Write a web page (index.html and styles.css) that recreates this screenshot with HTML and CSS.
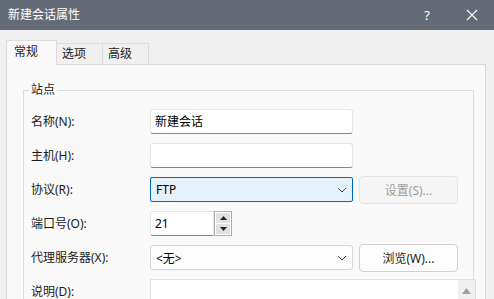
FILE: index.html
```html
<!DOCTYPE html>
<html lang="zh-cn">
<head>
    <meta charset="UTF-8">
    <title>新建会话属性</title>
    <link rel="stylesheet" href="styles.css">
</head>
<body>
<div class="dialog">
	<div class="titlebar">
		<span class="title">新建会话属性</span>
		<div class="title-btns">
			<span class="help">?</span>
			<span class="close">
				<svg width="12" height="12" viewBox="0 0 12 12"><path d="M1 1L11 11M11 1L1 11" stroke="#fff" stroke-width="1.1" fill="none"/></svg>
			</span>
		</div>
	</div>
	<div class="content">
		<div class="tabs">
			<div class="tab active">常规</div>
			<div class="tab">选项</div>
			<div class="tab">高级</div>
		</div>
		<div class="panel">
			<fieldset class="group">
				<legend>站点</legend>
				<div class="form">
					<label>名称(N):</label>
					<div class="input">新建会话</div>
					<span></span>

					<label>主机(H):</label>
					<div class="input"></div>
					<span></span>

					<label>协议(R):</label>
					<div class="select focus">
						<span>FTP</span>
						<svg width="10" height="6" viewBox="0 0 10 6"><path d="M1 1L5 5L9 1" stroke="#444" stroke-width="1" fill="none"/></svg>
					</div>
					<button class="btn" disabled>设置(S)...</button>

					<label>端口号(O):</label>
					<div class="port">
						<div class="input port-input">21</div>
						<div class="spin">
							<span class="spin-up"><svg width="7" height="4" viewBox="0 0 7 4"><path d="M0 4L3.5 0L7 4Z" fill="#222"/></svg></span>
							<span class="spin-down"><svg width="7" height="4" viewBox="0 0 7 4"><path d="M0 0L3.5 4L7 0Z" fill="#222"/></svg></span>
						</div>
					</div>
					<span></span>

					<label>代理服务器(X):</label>
					<div class="select">
						<span>&lt;无&gt;</span>
						<svg width="10" height="6" viewBox="0 0 10 6"><path d="M1 1L5 5L9 1" stroke="#444" stroke-width="1" fill="none"/></svg>
					</div>
					<button class="btn">浏览(W)...</button>

					<label>说明(D):</label>
					<div class="memo">
						<div class="memo-text"></div>
						<div class="memo-bar">
							<svg width="9" height="6" viewBox="0 0 9 6"><path d="M0 6L4.5 0L9 6Z" fill="#a0a0a0"/></svg>
						</div>
					</div>
				</div>
			</fieldset>
		</div>
	</div>
</div>
</body>
</html>
```

FILE: styles.css
```css
*{
	margin: 0;
	padding: 0;
	box-sizing: border-box;
}
html,body{
	height: 100%;
	overflow: hidden;
}
body{
	font-family: "Segoe UI", "Noto Sans", "Noto Sans CJK SC", sans-serif;
	font-size: 12px;
	color: #1b1b1b;
	background: #f0f0f0;
}
.dialog{
	width: 494px;
	height: 299px;
	overflow: hidden;
	background: #f0f0f0;
}
.titlebar{
	height: 30px;
	background: #646b77;
	color: #fff;
	display: flex;
	align-items: center;
	justify-content: space-between;
	padding-left: 8px;
}
.title{
	line-height: 16px;
}
.title-btns{
	display: flex;
	align-items: center;
}
.help{
	width: 30px;
	text-align: center;
	font-size: 13px;
	line-height: 16px;
	margin-right: 15px;
}
.close{
	width: 30px;
	display: flex;
	justify-content: center;
	margin-right: 7px;
}
.close svg{
	display: block;
}
.content{
	padding: 10px 0 0 6px;
}
.tabs{
	display: flex;
	align-items: flex-end;
	height: 24px;
}
.tab{
	width: 46px;
	height: 21px;
	line-height: 19px;
	padding-left: 5px;
	border: 1px solid #dcdcdc;
	border-left: none;
	border-bottom: none;
	background: #f0f0f0;
}
.tab.active{
	width: 51px;
	height: 25px;
	line-height: 22px;
	padding-left: 7px;
	border-left: 1px solid #d9d9d9;
	background: #f9f9f9;
	margin-bottom: -1px;
	position: relative;
}
.panel{
	width: 480px;
	height: 240px;
	overflow: hidden;
	border: 1px solid #d9d9d9;
	background: #f9f9f9;
	padding: 17px 11px 0 16px;
}
.group{
	border: 1px solid #dcdcdc;
	padding: 11px 14px 20px 7px;
	min-width: 0;
}
.group legend{
	padding: 0 2px;
	margin-left: -2px;
	line-height: 16px;
}
.form{
	display: grid;
	grid-template-columns: 113px 203px 99px;
	grid-auto-rows: 25px;
	column-gap: 6px;
	row-gap: 9px;
	align-items: center;
}
.form label{
	line-height: 16px;
}
.input{
	height: 25px;
	background: #fff;
	border: 1px solid #e5e5e5;
	border-bottom-color: #858585;
	border-radius: 3px;
	padding: 0 4px;
	line-height: 23px;
	color: #000;
}
.select{
	height: 25px;
	background: #fdfdfd;
	border: 1px solid #d6d6d6;
	border-radius: 3px;
	padding: 0 5px 0 5px;
	display: flex;
	align-items: center;
	justify-content: space-between;
	color: #000;
}
.select.focus{
	background: #e5f1fb;
	border-color: #0067c0;
	border-radius: 2px;
}
.btn{
	height: 28px;
	font: inherit;
	color: #1b1b1b;
	background: #fdfdfd;
	border: 1px solid #d0d0d0;
	border-radius: 4px;
}
.btn:disabled{
	color: #9d9d9d;
	background: #f5f5f5;
	border-color: #e5e5e5;
}
.port{
	display: flex;
	align-items: center;
}
.port-input{
	width: 64px;
	height: 25px;
	border-radius: 3px 0 0 3px;
}
.spin{
	width: 18px;
	height: 25px;
	border: 1px solid #adadad;
	background: #fff;
	display: flex;
	flex-direction: column;
	padding: 1px;
	gap: 1px;
}
.spin span{
	flex: 1;
	background: #e1e1e1;
	display: flex;
	align-items: center;
	justify-content: center;
}
.spin svg{
	display: block;
}
.memo{
	grid-column: 2 / -1;
	margin-right: -18px;
	align-self: start;
	height: 60px;
	background: #fff;
	border: 1px solid #e0e0e0;
	display: flex;
}
.memo-text{
	flex: 1;
}
.memo-bar{
	width: 17px;
	background: #f0f0f0;
	display: flex;
	justify-content: center;
	padding-top: 8px;
}
.memo-bar svg{
	display: block;
}
```
